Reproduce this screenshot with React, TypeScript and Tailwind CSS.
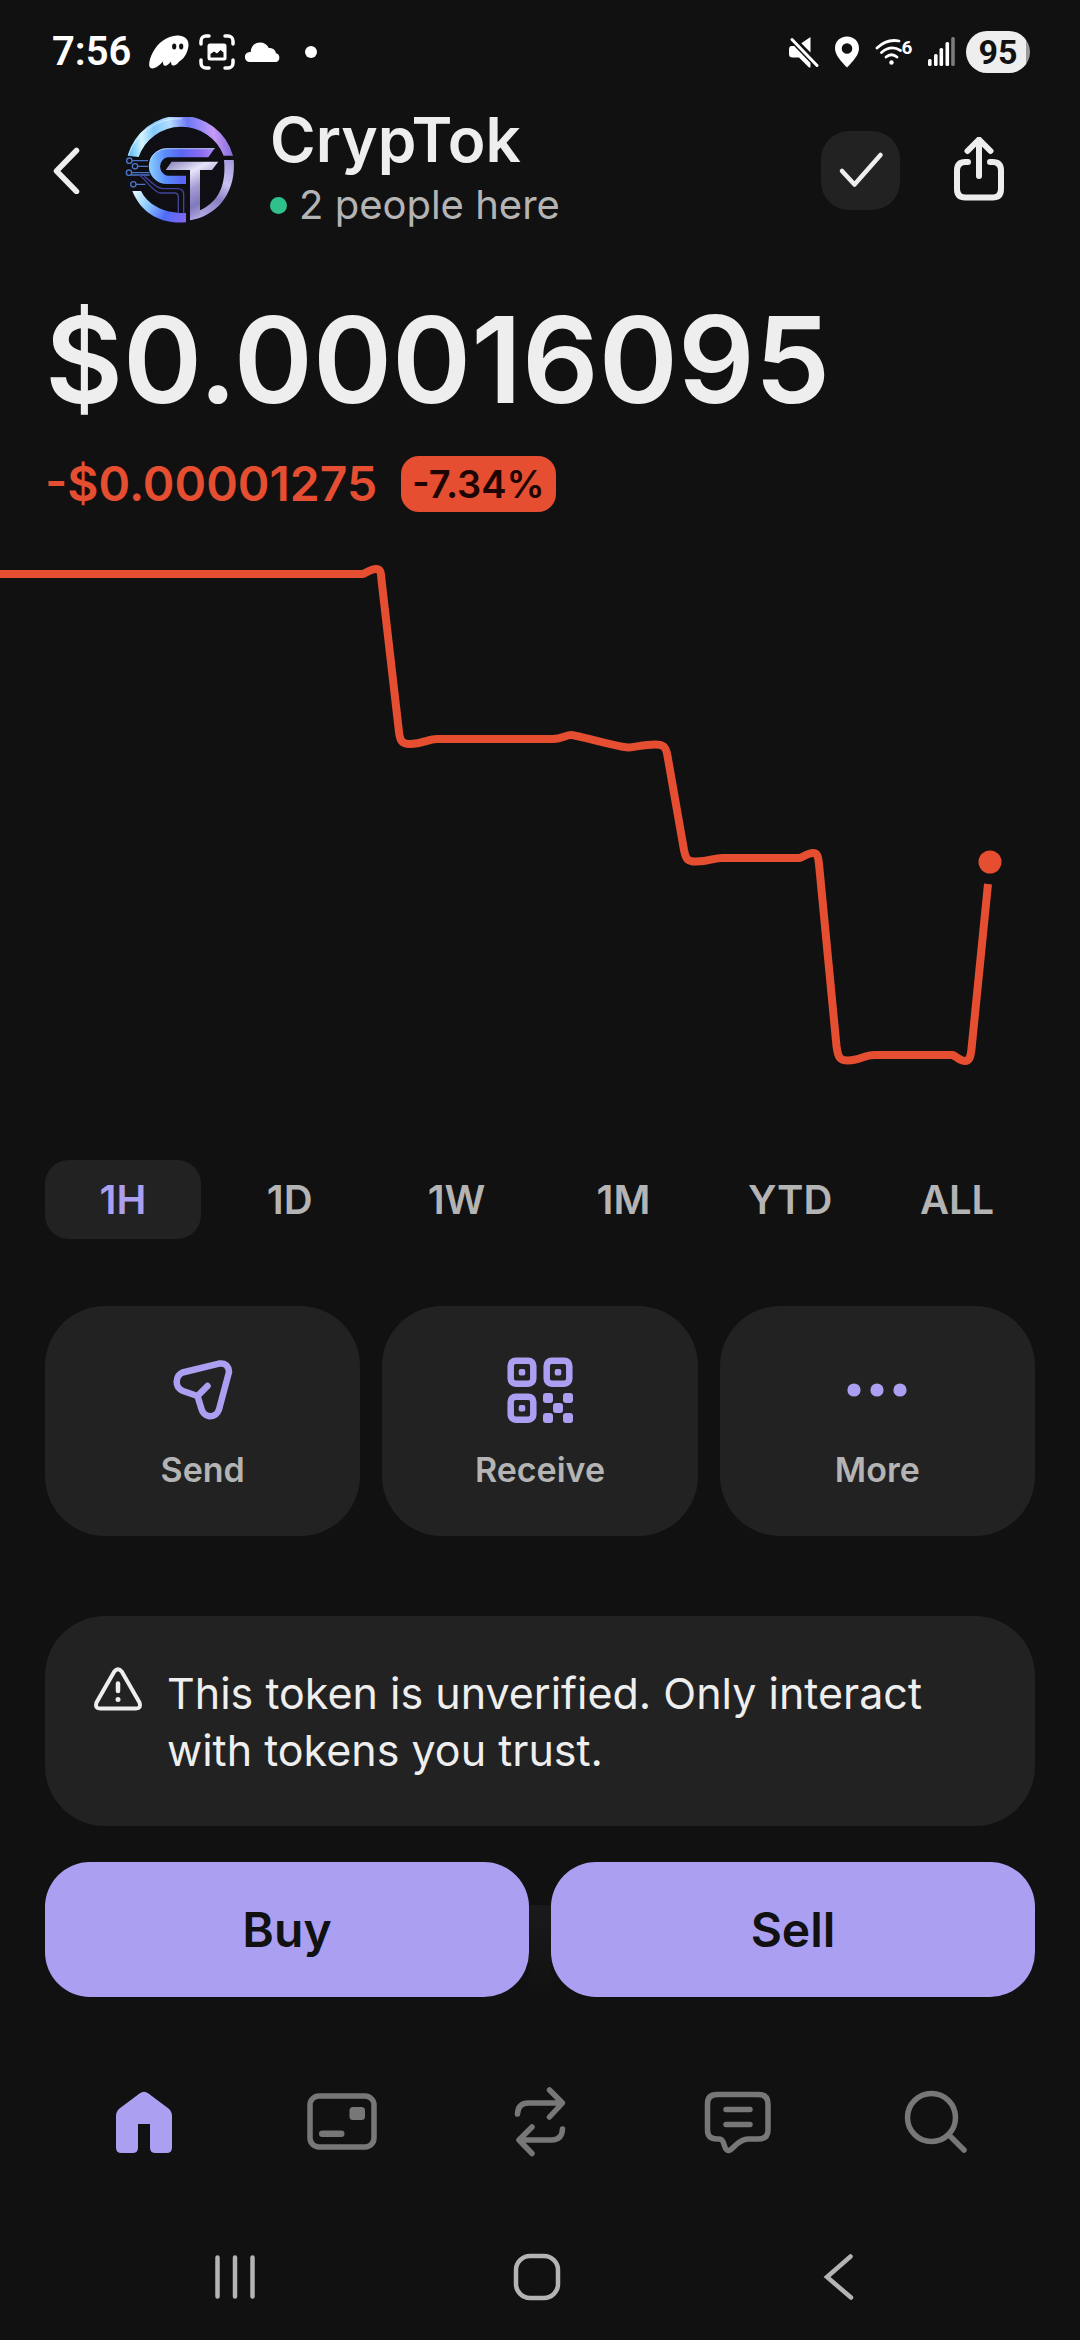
import type { ReactNode } from "react";

const ranges = ["1H", "1D", "1W", "1M", "YTD", "ALL"];

function GhostIcon() {
  return (
    <svg width="40" height="34" viewBox="0 0 40 34" aria-hidden="true">
      <path
        d="M28 .6C18 1 9 8 4 17 1 22.5-.2 27.500.3 31c.5 3 4 3 7 1.300 2.500-1.500 4.500-3.500 6.500-5.800.3 1.500.2 3 1.200 3.900 2 1.200 4.500-.8 7-3.900.2 1.500 0 3 1.200 3.700 2 1 4.800-.7 7-3.700C36.500 23 39.500 15 39.500 9.500 39.500 4 35 .3 28 .6Z"
        fill="#fff"
      />
      <ellipse cx="25.200" cy="11.500" rx="2.100" ry="3" fill="#111" />
      <ellipse cx="32.200" cy="11.500" rx="2.100" ry="3" fill="#111" />
    </svg>
  );
}

function CaptureIcon() {
  return (
    <svg width="36" height="36" viewBox="0 0 36 36" fill="none" aria-hidden="true">
      <path
        d="M2 10V7a5 5 0 0 1 5-5h3M26 2h3a5 5 0 0 1 5 5v3M34 26v3a5 5 0 0 1-5 5h-3M10 34H7a5 5 0 0 1-5-5v-3"
        stroke="#fff"
        strokeWidth="3.500"
        strokeLinecap="round"
      />
      <rect x="8.500" y="9.500" width="19" height="17" rx="2.500" fill="#fff" />
      <path d="M11.500 23.500v-3.500l3.500-2.500 3 2 3.500-3.500 3 2.500v5Z" fill="#111" />
    </svg>
  );
}

function CloudIcon() {
  return (
    <svg width="36" height="22" viewBox="0 0 36 22" aria-hidden="true">
      <path d="M5 21a5 5 0 0 1-.3-10h1C6 5 10 1.500 15 1.500c4 0 7.300 2 8.800 5.500 3.800-.3 6.800 2 7.200 5.300a4.500 4.500 0 0 1 0 8.700Z" fill="#fff" />
    </svg>
  );
}

function MuteIcon() {
  return (
    <svg width="30" height="32" viewBox="0 0 30 32" aria-hidden="true">
      <path d="M21.500 1v15.500L12.300 7.200ZM2.500 10H8L21.500 24v7.500h-1.500L10 21.500H3.500Q0 21.500 0 18v-4.500Q0 10 2.500 10Z" fill="#fff" />
      <path d="m3 3.500 25 26" stroke="#111" strokeWidth="6" />
      <path d="m3 3.500 25 26" stroke="#fff" strokeWidth="3" strokeLinecap="round" />
    </svg>
  );
}

function PinIcon() {
  return (
    <svg width="26" height="32" viewBox="0 0 26 32" aria-hidden="true">
      <path fillRule="evenodd" d="M13 .5C6 .5 1 5.500 1 12.200 1 19 7 25 13 31.500c6-6.500 12-12.500 12-19.300C25 5.500 20 .5 13 .5Zm0 6.700a5.300 5.300 0 1 1 0 10.600 5.300 5.300 0 0 1 0-10.600Z" fill="#fff" />
    </svg>
  );
}

function WifiIcon() {
  return (
    <svg width="38" height="30" viewBox="0 0 38 30" fill="none" aria-hidden="true">
      <g stroke="#fff" strokeWidth="2.800" strokeLinecap="round">
        <path d="M2 11Q12 1.500 24 4" />
        <path d="M6.500 15.500Q16 7.500 25.500 13.500" />
        <path d="M11 20q5.500-4.500 11 0" />
      </g>
      <circle cx="16.500" cy="25.500" r="2.200" fill="#fff" />
      <text x="26.500" y="16.500" fill="#fff" fontFamily="Roboto, sans-serif" fontWeight="700" fontSize="19">
        6
      </text>
    </svg>
  );
}

function SignalIcon() {
  return (
    <svg width="28" height="30" viewBox="0 0 28 30" aria-hidden="true">
      <g fill="#fff">
        <rect x="0" y="22" width="3.600" height="7" rx="1.500" />
        <rect x="6" y="17" width="3.600" height="12" rx="1.500" />
        <rect x="11.500" y="11" width="3.600" height="18" rx="1.500" />
        <rect x="17.500" y="5" width="3.600" height="24" rx="1.500" />
      </g>
      <rect x="23.200" y="0" width="3.600" height="29" rx="1.500" fill="#7c7c7c" />
    </svg>
  );
}

function TokenLogo() {
  return (
    <svg width="110" height="107" viewBox="30 28 330 321" fill="none" aria-hidden="true">
      <defs>
        <linearGradient id="ringTop" x1="50" y1="150" x2="345" y2="120" gradientUnits="userSpaceOnUse">
          <stop offset="0" stopColor="#6cc4f8" />
          <stop offset=".12" stopColor="#d4f3ff" />
          <stop offset=".25" stopColor="#7fc8fb" />
          <stop offset=".42" stopColor="#b5dcff" />
          <stop offset=".6" stopColor="#6d78f6" />
          <stop offset=".85" stopColor="#c79bf8" />
          <stop offset="1" stopColor="#8a72dd" />
        </linearGradient>
        <linearGradient id="ringRight" x1="345" y1="155" x2="250" y2="335" gradientUnits="userSpaceOnUse">
          <stop offset="0" stopColor="#a69be0" />
          <stop offset=".35" stopColor="#c9c2ee" />
          <stop offset=".6" stopColor="#8981c4" />
          <stop offset="1" stopColor="#b5aee6" />
        </linearGradient>
        <linearGradient id="ringBottom" x1="60" y1="250" x2="213" y2="335" gradientUnits="userSpaceOnUse">
          <stop offset="0" stopColor="#e2f8ff" />
          <stop offset=".3" stopColor="#8ecbff" />
          <stop offset=".65" stopColor="#4f6cf8" />
          <stop offset="1" stopColor="#8268f0" />
        </linearGradient>
        <linearGradient id="letterC" x1="100" y1="160" x2="299" y2="150" gradientUnits="userSpaceOnUse">
          <stop offset="0" stopColor="#8cd0ff" />
          <stop offset=".25" stopColor="#5a8dfb" />
          <stop offset=".5" stopColor="#5966f3" />
          <stop offset=".8" stopColor="#8c6cf0" />
          <stop offset="1" stopColor="#a98bf0" />
        </linearGradient>
        <linearGradient id="letterT" x1="180" y1="165" x2="270" y2="330" gradientUnits="userSpaceOnUse">
          <stop offset="0" stopColor="#9a97c8" />
          <stop offset=".25" stopColor="#e6e4fa" />
          <stop offset=".5" stopColor="#a29bd2" />
          <stop offset=".75" stopColor="#8078bd" />
          <stop offset="1" stopColor="#b9b2e6" />
        </linearGradient>
      </defs>
      <circle cx="196" cy="189" r="159" stroke="#16152a" strokeWidth="2" fill="#0e0e13" />
      <path d="M38 144A164 164 0 0 1 354 144H326A136 136 0 0 0 71 148Z" fill="url(#ringTop)" />
      <path d="M40 142A162 162 0 0 1 200 33" stroke="#e2f6ff" strokeOpacity=".7" strokeWidth="3" />
      <path d="M327 157H356C364 250 310 325 225 338V187H255V308C305 285 335 240 327 157Z" fill="url(#ringRight)" />
      <path d="M52 250H78C98 290 145 318 213 316V344C135 350 78 315 52 250Z" fill="url(#ringBottom)" />
      <path d="M299 122H155a53.500 53.500 0 0 0 0 107h58v-25h-55a28 28 0 0 1 0-55h122Z" fill="url(#letterC)" />
      <path d="M299 123H155a53 53 0 0 0-50 35" stroke="#c9e6ff" strokeOpacity=".7" strokeWidth="3" />
      <path d="M170 162H310L291 187H255V325L225 338V187H152Z" fill="url(#letterT)" />
      <g stroke="#4b74c4" strokeWidth="4">
        <circle cx="43" cy="159" r="8" />
        <circle cx="60" cy="176" r="8" />
        <circle cx="42" cy="195" r="8" />
        <circle cx="55" cy="230" r="8" />
        <path d="M51 159h48M68 176h32M50 195h54M48 202h56M63 230h28" />
      </g>
      <g stroke="#43439c" strokeWidth="4" strokeLinejoin="round">
        <path d="M72 202c20 10 30 40 62 54h44q12 0 12 12v49" />
        <path d="M88 206c16 10 28 32 54 37h44q20 0 20 16v58" />
      </g>
    </svg>
  );
}

function SendIcon() {
  return (
    <svg width="66" height="66" viewBox="0 0 66 66" fill="none" stroke="#ab9ff2" strokeWidth="6.500" strokeLinecap="round" strokeLinejoin="round" aria-hidden="true">
      <path d="M12.500 15.500 49 6.600Q58.500 5.500 59 15L49 52.500C47 58 43.500 59.500 39.500 59.200 35 58.500 32.500 56 31.500 52L27.500 39 13 34C8.500 32 6.500 29 6.700 24.500 7 20 9 17 12.500 15.500Z" />
      <path d="m27.500 39 10-10" />
    </svg>
  );
}

function QrIcon() {
  return (
    <svg width="66" height="66" viewBox="0 0 66 66" fill="none" aria-hidden="true">
      <g stroke="#ab9ff2" strokeWidth="6.500">
        <rect x="3.700" y="3.700" width="22.600" height="23" rx="5" />
        <rect x="39.700" y="3.700" width="22.600" height="23" rx="5" />
        <rect x="3.700" y="39.700" width="22.600" height="23" rx="5" />
      </g>
      <g fill="#ab9ff2">
        <rect x="11.700" y="12" width="6.600" height="6.600" rx="2" />
        <rect x="47.700" y="12" width="6.600" height="6.600" rx="2" />
        <rect x="11.700" y="48" width="6.600" height="6.600" rx="2" />
        <rect x="36" y="36" width="10" height="10" rx="3" />
        <rect x="56" y="36" width="10" height="10" rx="3" />
        <rect x="46" y="46" width="10" height="10" rx="3" />
        <rect x="36" y="56" width="10" height="10" rx="3" />
        <rect x="56" y="56" width="10" height="10" rx="3" />
      </g>
    </svg>
  );
}

function MoreIcon() {
  return (
    <svg width="66" height="66" viewBox="0 0 66 66" fill="#ab9ff2" aria-hidden="true">
      <circle cx="10" cy="33" r="6.600" />
      <circle cx="33" cy="33" r="6.600" />
      <circle cx="56" cy="33" r="6.600" />
    </svg>
  );
}

function Action({ label, children }: { label: string; children: ReactNode }) {
  return (
    <button className="flex flex-1 flex-col items-center gap-[25px] rounded-[60px] bg-[#222222] pt-[51px] pb-[44px]">
      {children}
      <span className="text-[34px] leading-[44px] font-semibold text-[#b4b4b4]">{label}</span>
    </button>
  );
}

function NavItem({ label, children }: { label: string; children: ReactNode }) {
  return (
    <a href="#" aria-label={label} className="flex flex-1 items-center justify-center">
      {children}
    </a>
  );
}

export default function App() {
  return (
    <div className="flex min-h-screen flex-col bg-[#111111] font-['Inter',sans-serif] text-[#eeeeee]">
      <div className="flex h-[102px] items-center justify-between pt-[2px] pr-[50px] pl-[52px] font-['Roboto',sans-serif]">
        <div className="flex items-center">
          <span className="w-[97px] text-[40px] leading-[48px] font-semibold text-white">7:56</span>
          <div className="flex items-center gap-[10px]">
            <GhostIcon />
            <CaptureIcon />
            <CloudIcon />
          </div>
          <span className="ml-6 size-3 rounded-full bg-white" />
        </div>
        <div className="flex items-center gap-[15px]">
          <MuteIcon />
          <PinIcon />
          <WifiIcon />
          <div className="flex items-center gap-[10px]">
            <SignalIcon />
            <span className="flex h-[42px] w-16 items-center justify-center rounded-full bg-linear-to-r from-[#eeeeee] from-94% to-[#9a9a9a] to-94% text-[34px] leading-[42px] font-bold text-[#111111]">
              95
            </span>
          </div>
        </div>
      </div>

      <header className="flex h-[136px] items-center pr-[62px] pl-[45px]">
        <button aria-label="Back" className="mr-[38px] flex w-[42px] justify-center">
          <svg width="42" height="48" viewBox="0 0 42 48" fill="none" aria-hidden="true">
            <path d="M31.500 4.500 11.500 25l20 20.500" stroke="#eeeeee" strokeWidth="5.500" strokeLinecap="round" strokeLinejoin="round" />
          </svg>
        </button>
        <TokenLogo />
        <div className="ml-[35px] flex flex-1 flex-col">
          <h1 className="text-[62px] leading-[70px] font-semibold">CrypTok</h1>
          <p className="flex items-center gap-3 text-[40px] leading-[60px] text-[#b4b4b4]">
            <span className="size-[17px] rounded-full bg-[#30c08b]" />
            2 people here
          </p>
        </div>
        <div className="flex items-center gap-[39px]">
          <button aria-label="Following" className="flex size-[79px] items-center justify-center rounded-[28px] bg-[#222222]">
            <svg width="48" height="48" viewBox="0 0 48 48" fill="none" aria-hidden="true">
              <path d="m5 25 12.500 13.500L43.500 9" stroke="#eeeeee" strokeWidth="4.500" strokeLinecap="round" strokeLinejoin="round" />
            </svg>
          </button>
          <button aria-label="Share" className="flex size-[79px] items-center justify-center">
            <svg width="52" height="66" viewBox="0 0 52 66" fill="none" stroke="#eeeeee" strokeWidth="6" strokeLinecap="round" strokeLinejoin="round" aria-hidden="true">
              <path d="M26 3v36M14.500 14 26 2.500 37.500 14M15 25h-2.500q-8.500 0-8.500 8.500v18.500q0 8.500 8.500 8.500h27q8.500 0 8.500-8.500v-18.500q0-8.500-8.500-8.500H37" />
            </svg>
          </button>
        </div>
      </header>

      <main className="flex flex-col">
        <section className="mt-[50px] px-[45px]">
          <p className="text-[120px] leading-[144px] font-semibold">$0.00016095</p>
          <div className="mt-6 flex items-center gap-6">
            <span className="text-[48px] leading-[56px] font-semibold text-[#e54e31]">-$0.00001275</span>
            <span className="rounded-[18px] bg-[#e54e31] px-[11px] text-[38px] leading-[56px] font-semibold text-[#1d0503]">-7.34%</span>
          </div>
        </section>

        <svg className="mt-7 w-full" viewBox="0 540 1080 560" fill="none" role="img" aria-label="Price over the last hour">
          <path
            d="M0 574H363C369 571 372 569 376 569C380 569 381 571 381.500 580L399 732C400 741 402 744 410 744C423 744 428 739 437 739H553C561 739 566 735 571 735C576 735 620 747.500 628 747.500C633 747.500 645 744.500 655 744.500C664 744.500 666 747 667.500 756L684 850C686 860 688 861.500 696 861.500C709 861.500 714 858 722 858H800C806 855 809 853 813 853C817 853 818 855 819 864L836.500 1046C838 1058 840 1060.500 848 1060.500C859 1060.500 865 1055 874 1055H953C958 1058 961 1061 965 1061C969 1061 970.500 1058 971.500 1049L988 884"
            stroke="#e54e31"
            strokeWidth="8"
            strokeLinejoin="round"
          />
          <circle cx="990" cy="862" r="11.500" fill="#e54e31" />
        </svg>

        <div className="mt-[60px] grid grid-cols-6 gap-[11px] px-[45px]">
          {ranges.map((range, i) => (
            <button
              key={range}
              aria-pressed={i === 0}
              className={
                i === 0
                  ? "rounded-[24px] bg-[#222222] py-[15px] text-[40px] leading-[49px] font-semibold text-[#ab9ff2]"
                  : "rounded-[24px] py-[15px] text-[40px] leading-[49px] font-semibold text-[#b4b4b4]"
              }
            >
              {range}
            </button>
          ))}
        </div>

        <div className="mt-[67px] flex gap-[22px] px-[45px]">
          <Action label="Send">
            <SendIcon />
          </Action>
          <Action label="Receive">
            <QrIcon />
          </Action>
          <Action label="More">
            <MoreIcon />
          </Action>
        </div>

        <div role="alert" className="mx-[45px] mt-20 flex gap-6 rounded-[60px] bg-[#222222] pt-[49px] pr-[80px] pb-[47px] pl-12">
          <svg className="shrink-0" width="50" height="48" viewBox="0 0 50 48" fill="none" aria-hidden="true">
            <path
              d="M21.300 6.500Q25 2 28.700 6.500L46.500 37.500Q48.500 43.500 43 43.500H7Q1.500 43.500 3.500 37.500Z"
              stroke="#eeeeee"
              strokeWidth="4"
              strokeLinejoin="round"
            />
            <path d="M25 18.500v7.500" stroke="#eeeeee" strokeWidth="4.500" strokeLinecap="round" />
            <circle cx="25" cy="34.500" r="2.500" fill="#eeeeee" />
          </svg>
          <p className="text-[43px] leading-[57px]">This token is unverified. Only interact with tokens you trust.</p>
        </div>
      </main>

      <div className="mt-9 flex px-[45px]">
        <button className="flex-1 rounded-[45px] bg-[#ab9ff2] py-[38px] text-[48px] leading-[59px] font-semibold text-[#111111]">Buy</button>
        <div className="mt-[43px] w-[22px] bg-linear-to-b from-[#1a1a1a] to-[#111111]" />
        <button className="flex-1 rounded-[45px] bg-[#ab9ff2] py-[38px] text-[48px] leading-[59px] font-semibold text-[#111111]">Sell</button>
      </div>

      <nav aria-label="Main" className="mt-[52px] flex h-[145px] px-[45px]">
        <NavItem label="Home">
          <svg width="72" height="72" viewBox="0 0 72 72" aria-hidden="true">
            <path
              d="M31.500 7.500Q36 4 40.500 7.500L60.500 22.500Q64 25.500 64 30V61.500Q64 67 58.500 67H47.500Q42 67 42 61.500V38H30V61.500Q30 67 24.500 67H13.500Q8 67 8 61.500V30Q8 25.500 11.500 22.500Z"
              fill="#ab9ff2"
            />
          </svg>
        </NavItem>
        <NavItem label="Card">
          <svg width="72" height="72" viewBox="0 0 72 72" fill="none" aria-hidden="true">
            <rect x="4" y="10" width="64" height="51" rx="9" stroke="#777777" strokeWidth="5.500" />
            <rect x="43.500" y="21" width="15.500" height="13" rx="3.500" fill="#777777" />
            <rect x="13" y="44.500" width="25.500" height="6.500" rx="3.200" fill="#777777" />
          </svg>
        </NavItem>
        <NavItem label="Swap">
          <svg width="72" height="72" viewBox="0 0 72 72" fill="none" stroke="#777777" strokeWidth="5.500" strokeLinecap="round" strokeLinejoin="round" aria-hidden="true">
            <path d="M13.500 28Q14 17 24.500 17H57M45.500 4 58.500 17 45.500 31M58.500 43Q58 54 47.500 54H15M28 41 15 54l13 13.500" />
          </svg>
        </NavItem>
        <NavItem label="Chat">
          <svg width="72" height="72" viewBox="0 0 72 72" fill="none" stroke="#777777" strokeWidth="5.500" strokeLinecap="round" strokeLinejoin="round" aria-hidden="true">
            <path d="M15 8.500H56.500Q66 8.500 66 18V44Q66 53 56.500 53H46C36 53 31 64 26.500 64.500 21 65 23.500 53 17.500 53H15Q5.500 53 5.500 44V18Q5.500 8.500 15 8.500Z" />
            <path d="M24 23.500h24M24 38.500h24" />
          </svg>
        </NavItem>
        <NavItem label="Search">
          <svg width="72" height="72" viewBox="0 0 72 72" fill="none" stroke="#777777" strokeWidth="5.500" strokeLinecap="round" aria-hidden="true">
            <circle cx="31.500" cy="31.500" r="24" />
            <path d="m49 49 15 15" />
          </svg>
        </NavItem>
      </nav>

      <div className="mt-5 flex h-[126px] pr-[90px] pl-[84px]">
        <button aria-label="Recent apps" className="flex flex-1 items-center justify-center">
          <svg width="48" height="48" viewBox="0 0 48 48" stroke="#b4b4b4" strokeWidth="4.500" strokeLinecap="round" aria-hidden="true">
            <path d="M6.500 4.500v39M24 4.500v39M41.500 4.500v39" />
          </svg>
        </button>
        <button aria-label="Home screen" className="flex flex-1 items-center justify-center">
          <svg width="48" height="48" viewBox="0 0 48 48" fill="none" aria-hidden="true">
            <rect x="3" y="3" width="42" height="42" rx="14" stroke="#b4b4b4" strokeWidth="4.500" />
          </svg>
        </button>
        <button aria-label="Previous screen" className="flex flex-1 items-center justify-center">
          <svg width="48" height="48" viewBox="0 0 48 48" fill="none" aria-hidden="true">
            <path d="M35.500 3.500 12 24l24 20.500" stroke="#b4b4b4" strokeWidth="4.500" strokeLinecap="round" strokeLinejoin="miter" />
          </svg>
        </button>
      </div>
    </div>
  );
}
